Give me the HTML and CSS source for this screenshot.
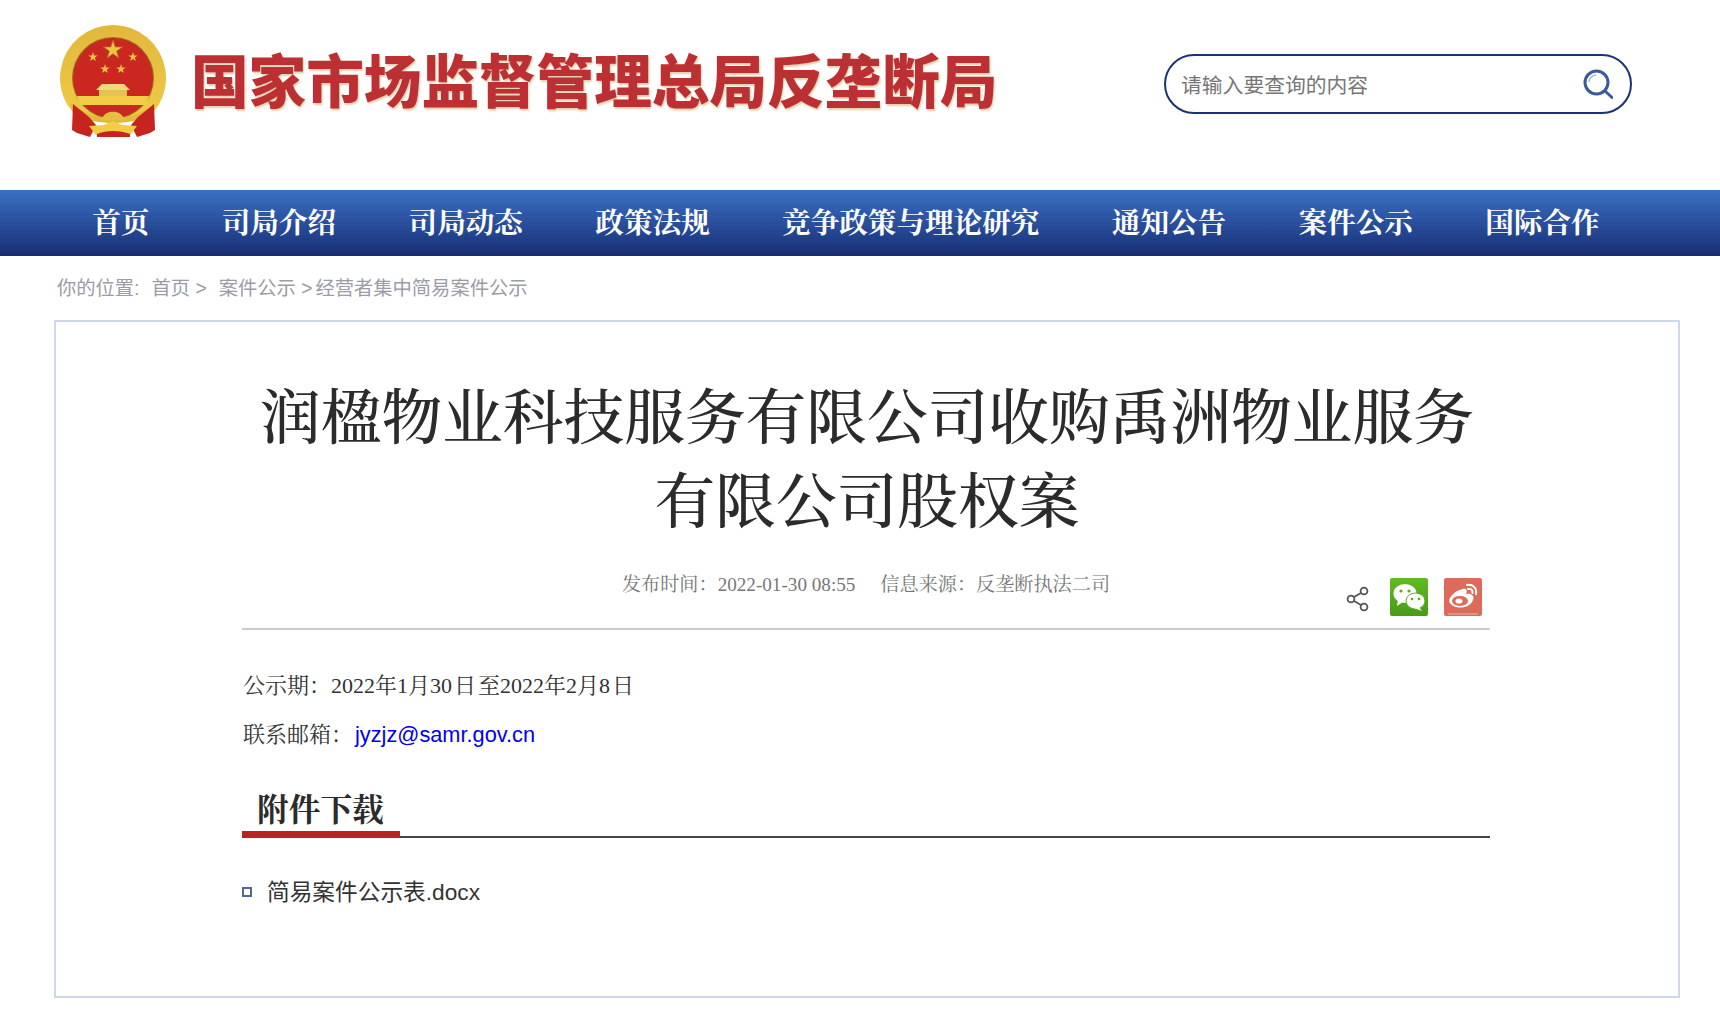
FILE: index.html
```html
<!DOCTYPE html>
<html lang="zh-CN">
<head>
    <meta charset="UTF-8">
    <title>润楹物业科技服务有限公司收购禹洲物业服务有限公司股权案</title>
    <link rel="stylesheet" href="styles.css">
</head>
<body>
    <header class="header">
        <div class="logo">
            <svg class="emblem" viewBox="0 0 107 112" width="107" height="112">
                <defs>
                    <polygon id="star" points="0,-1 .224,-.309 .951,-.309 .363,.118 .588,.809 0,.382 -.588,.809 -.363,.118 -.951,-.309 -.224,-.309"/>
                    <linearGradient id="gold" x1="0" y1="0" x2="0" y2="1">
                        <stop offset="0" stop-color="#e2b83c"/>
                        <stop offset="1" stop-color="#efcb46"/>
                    </linearGradient>
                </defs>
                <!-- ring, open at the bottom -->
                <path d="M7.400 80 A53 53 0 1 1 98.600 80 L90 92 Q53 100 17 92 Z" fill="url(#gold)"/>
                <circle cx="53" cy="53" r="41" fill="#9a7420"/>
                <circle cx="53" cy="53" r="40" fill="#c9271f"/>
                <use href="#star" transform="translate(53 25) scale(10)" fill="#f2c63f" stroke="#a3701c" stroke-width=".08"/>
                <use href="#star" transform="translate(33 32) scale(5)" fill="#f2c63f"/>
                <use href="#star" transform="translate(73 32) scale(5)" fill="#f2c63f"/>
                <use href="#star" transform="translate(45 44) scale(5)" fill="#f2c63f"/>
                <use href="#star" transform="translate(61 44) scale(5)" fill="#f2c63f"/>
                <!-- gate -->
                <path d="M42 59 H64 L70 65 H36 Z" fill="#f3d97a"/>
                <path d="M39 65 H67 V72 H39 Z" fill="#e6c255"/>
                <path d="M17 71 H89 L86 80 H20 Z" fill="#f0cd45"/>
                <path d="M11 79 C26 90 40 93 53 93 C66 93 80 90 95 79 L93 89 C78 96 66 98 53 98 C40 98 28 96 13 89 Z" fill="#e3b93a"/>
                <path d="M43 92 C46 85 60 85 63 92 L67 95 H39 Z" fill="#e7bf42"/>
                <!-- ribbons and flowers -->
                <path d="M13 79 L29 92 L36 100 L30 112 L17 108 L12 105 Z" fill="#c8241f"/>
                <path d="M94 79 L78 92 L71 100 L77 112 L90 108 L95 105 Z" fill="#c8241f"/>
                <path d="M29 101 L44 100 L53 96 L62 100 L77 101 L70 110 L53 106 L36 110 Z" fill="#f0cd45"/>
                <path d="M37 109 C46 105 60 105 70 109 V112 H37 Z" fill="#c8241f"/>
            </svg>
            <div class="site-name">国家市场监督管理总局反垄断局</div>
        </div>
        <div class="search">
            <span class="search-text">请输入要查询的内容</span>
            <svg class="search-icon" viewBox="0 0 30 30" width="30" height="30">
                <circle cx="13.500" cy="13.500" r="11.500" fill="none" stroke="#3a5a9c" stroke-width="3"/>
                <path d="M6 13 C6.500 9 9 6.500 13 6" fill="none" stroke="#a9bbd9" stroke-width="1.500"/>
                <path d="M22 22 L29 28.500" stroke="#3a5a9c" stroke-width="3" stroke-linecap="round"/>
            </svg>
        </div>
    </header>

    <nav class="nav">
        <a>首页</a>
        <a>司局介绍</a>
        <a>司局动态</a>
        <a>政策法规</a>
        <a>竞争政策与理论研究</a>
        <a>通知公告</a>
        <a>案件公示</a>
        <a>国际合作</a>
    </nav>

    <div class="crumbs">
        <span class="crumb-label">你的位置:</span>
        <span class="crumb-home">首页 &gt;</span>
        <span class="crumb-case">案件公示 &gt;</span>
        <span>经营者集中简易案件公示</span>
    </div>

    <main class="box">
        <h1 class="title">润楹物业科技服务有限公司收购禹洲物业服务<br>有限公司股权案</h1>

        <div class="meta">
            <div></div>
            <div class="meta-text">
                <span>发布时间：2022-01-30 08:55</span>
                <span>信息来源：反垄断执法二司</span>
            </div>
            <div class="share">
                <svg class="share-icon" viewBox="0 0 24 26" width="24" height="26">
                    <g fill="none" stroke="#555" stroke-width="1.800">
                        <circle cx="5" cy="13" r="3.400"/>
                        <circle cx="18" cy="5" r="3.400"/>
                        <circle cx="18" cy="21" r="3.400"/>
                        <path d="M8 11 L15 7 M8 15 L15 19"/>
                    </g>
                </svg>
                <svg class="share-btn" viewBox="0 0 38 38" width="38" height="38">
                    <defs>
                        <linearGradient id="wx" x1="0" y1="0" x2="0" y2="1">
                            <stop offset="0" stop-color="#62bb20"/>
                            <stop offset="1" stop-color="#489a18"/>
                        </linearGradient>
                    </defs>
                    <rect width="38" height="38" rx="2" fill="url(#wx)"/>
                    <ellipse cx="15" cy="15.500" rx="11.500" ry="9.500" fill="#fff"/>
                    <path d="M8 22 L7 28 L13 24 Z" fill="#fff"/>
                    <ellipse cx="25.500" cy="23" rx="9.500" ry="8" fill="#fff" stroke="#58ad1d" stroke-width="1"/>
                    <path d="M29 29 L32 33 L24 30 Z" fill="#fff"/>
                    <circle cx="11" cy="13" r="1.600" fill="#58ad1d"/>
                    <circle cx="19" cy="13" r="1.600" fill="#58ad1d"/>
                    <circle cx="22" cy="21" r="1.300" fill="#58ad1d"/>
                    <circle cx="29" cy="21" r="1.300" fill="#58ad1d"/>
                </svg>
                <svg class="share-btn" viewBox="0 0 38 38" width="38" height="38">
                    <rect width="38" height="38" rx="2" fill="#dc6b5c"/>
                    <path d="M16 12 C22 9 24 12 22 16 C27 15 31 18 29 22 C27 28 19 31 12 29 C6 27 4 23 6 20 C8 16 12 13 16 12 Z" fill="#fff"/>
                    <ellipse cx="16" cy="23" rx="8" ry="5" fill="#dc6b5c"/>
                    <ellipse cx="15" cy="23" rx="3.500" ry="2.600" fill="#fff"/>
                    <path d="M23 7 C29 6 33 10 32 16 M24 11 C27 10.500 29 12 28.500 15" fill="none" stroke="#fff" stroke-width="2" stroke-linecap="round"/>
                    <path d="M4 36 H34" stroke="#f0b3ab" stroke-width="1"/>
                </svg>
            </div>
        </div>

        <div class="article">
            <p>公示期：2022年1月30 日 至2022年2月8 日</p>
            <p>联系邮箱：<a class="mail">jyzjz@samr.gov.cn</a></p>
        </div>

        <div class="attach-head"><span>附件下载</span></div>
        <ul class="files">
            <li>简易案件公示表.docx</li>
        </ul>
    </main>
</body>
</html>
```

FILE: styles.css
```css
* {
    box-sizing: border-box;
}
body {
    margin: 0;
    background: #fff;
    font-family: "Liberation Serif", "Noto Serif CJK SC", "Noto Sans CJK SC", serif;
    color: #333;
}
.header {
    height: 190px;
    display: flex;
    justify-content: space-between;
    padding: 25px 88px 0 60px;
}
.logo {
    display: flex;
    align-items: flex-start;
}
.emblem {
    display: block;
}
.site-name {
    margin: 20px 0 0 24px;
    font-family: "Noto Sans CJK SC", sans-serif;
    font-weight: 900;
    font-size: 57.600px;
    line-height: 66px;
    color: #bc2f33;
    text-shadow: 1px 2px 2px #e3cfae;
    white-space: nowrap;
}
.search {
    width: 468px;
    height: 60px;
    margin-top: 29px;
    border: 2.5px solid #1b3274;
    border-radius: 30px;
    display: flex;
    align-items: center;
    justify-content: space-between;
    padding: 0 17px 0 15px;
}
.search-text {
    font-family: "Liberation Sans", "Noto Sans CJK SC", sans-serif;
    font-size: 20.800px;
    color: #777;
}
.nav {
    height: 66px;
    background: linear-gradient(#3a70c4, #182e74);
    display: flex;
    align-items: center;
    padding: 0 0 6px 56px;
}
.nav a {
    padding: 0 36.200px;
    font-size: 28.600px;
    font-weight: bold;
    color: #fff;
    white-space: nowrap;
}
.crumbs {
    height: 64px;
    display: flex;
    align-items: center;
    padding: 0 0 2px 57px;
    font-family: "Liberation Sans", "Noto Sans CJK SC", sans-serif;
    font-size: 19.300px;
    color: #9a9ca6;
    white-space: nowrap;
}
.crumb-label {
    margin-right: 12px;
}
.crumb-home {
    margin-right: 12px;
}
.crumb-case {
    margin-right: 3px;
}
.box {
    margin-left: 54px;
    width: 1626px;
    height: 678px;
    border: 2px solid #cfd8e8;
    padding: 0 188px 0 186px;
}
.title {
    margin: 55px 0 0;
    padding-left: 2px;
    font-size: 60.700px;
    font-weight: 500;
    line-height: 84px;
    text-align: center;
    color: #2b2b2b;
    white-space: nowrap;
}
.meta {
    height: 67px;
    margin-top: 18px;
    display: grid;
    grid-template-columns: 1fr auto 1fr;
    border-bottom: 2px solid #ccc;
}
.meta-text {
    display: flex;
    gap: 25px;
    padding-top: 6px;
    font-size: 19.150px;
    line-height: 32px;
    color: #777;
    white-space: nowrap;
}
.share {
    display: flex;
    justify-content: flex-end;
    align-items: flex-start;
    gap: 16px;
    padding: 15px 8px 0 0;
}
.share-icon {
    margin: 8px 4px 0 0;
}
.article {
    padding: 40px 0 0 1px;
}
.article p {
    margin: 0 0 17px;
    font-size: 22px;
    line-height: 32px;
    color: #333;
    white-space: nowrap;
    word-spacing: -3.500px;
}
.mail {
    margin-left: 2px;
    font-family: "Liberation Sans", sans-serif;
    font-size: 21.750px;
    color: #0000ee;
}
.attach-head {
    height: 46px;
    margin-top: 41px;
    border-bottom: 2px solid #444;
}
.attach-head span {
    display: inline-block;
    width: 158px;
    height: 46px;
    padding-left: 15px;
    border-bottom: 7px solid #bd2420;
    font-size: 31.700px;
    font-weight: bold;
    line-height: 38px;
    color: #2b2b2b;
}
.files {
    list-style: none;
    margin: 38px 0 0;
    padding: 0;
}
.files li {
    display: flex;
    align-items: center;
    font-family: "Liberation Sans", "Noto Sans CJK SC", sans-serif;
    font-size: 22.700px;
    line-height: 32px;
    color: #333;
}
.files li::before {
    content: "";
    box-sizing: border-box;
    width: 10px;
    height: 10px;
    margin-right: 15px;
    border: 2px solid #53659c;
}
```
